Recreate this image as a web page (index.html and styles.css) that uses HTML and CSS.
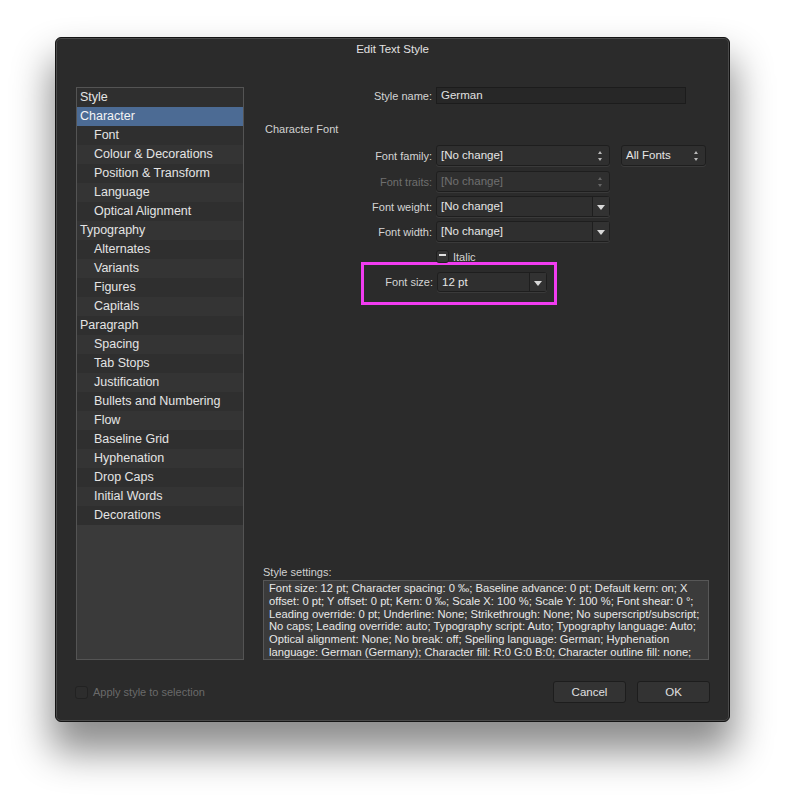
FILE: index.html
```html
<!DOCTYPE html>
<html lang="en">
<head>
    <meta charset="UTF-8">
    <title>Edit Text Style</title>
    <link rel="stylesheet" href="styles.css">
</head>
<body>
<div class="window">
    <div class="title">Edit Text Style</div>
    <div class="content">
        <ul class="side">
            <li>Style</li>
            <li class="active">Character</li>
            <li class="sub">Font</li>
            <li class="sub">Colour &amp; Decorations</li>
            <li class="sub">Position &amp; Transform</li>
            <li class="sub">Language</li>
            <li class="sub">Optical Alignment</li>
            <li>Typography</li>
            <li class="sub">Alternates</li>
            <li class="sub">Variants</li>
            <li class="sub">Figures</li>
            <li class="sub">Capitals</li>
            <li>Paragraph</li>
            <li class="sub">Spacing</li>
            <li class="sub">Tab Stops</li>
            <li class="sub">Justification</li>
            <li class="sub">Bullets and Numbering</li>
            <li class="sub">Flow</li>
            <li class="sub">Baseline Grid</li>
            <li class="sub">Hyphenation</li>
            <li class="sub">Drop Caps</li>
            <li class="sub">Initial Words</li>
            <li class="sub">Decorations</li>
        </ul>
        <div class="main">
            <div class="row name-row">
                <label>Style name:</label>
                <div class="input">German</div>
            </div>
            <div class="heading">Character Font</div>
            <div class="row">
                <label>Font family:</label>
                <div class="select wide">[No change]<span class="updown"><i class="up"></i><i class="dn"></i></span></div>
                <div class="select fonts">All Fonts<span class="updown"><i class="up"></i><i class="dn"></i></span></div>
            </div>
            <div class="row disabled">
                <label>Font traits:</label>
                <div class="select wide">[No change]<span class="updown"><i class="up"></i><i class="dn"></i></span></div>
            </div>
            <div class="row">
                <label>Font weight:</label>
                <div class="select wide drop">[No change]<span class="arrow"></span></div>
            </div>
            <div class="row">
                <label>Font width:</label>
                <div class="select wide drop">[No change]<span class="arrow"></span></div>
            </div>
            <div class="check-row">
                <span class="check mixed"></span>
                <span>Italic</span>
            </div>
            <div class="mark">
                <div class="row">
                    <label>Font size:</label>
                    <div class="select size drop">12 pt<span class="arrow"></span></div>
                </div>
            </div>
            <div class="settings">
                <div class="settings-label">Style settings:</div>
                <div class="settings-box">Font size: 12 pt; Character spacing: 0 ‰; Baseline advance: 0 pt; Default kern: on; X<br>
                    offset: 0 pt; Y offset: 0 pt; Kern: 0 ‰; Scale X: 100 %; Scale Y: 100 %; Font shear: 0 °;<br>
                    Leading override: 0 pt; Underline: None; Strikethrough: None; No superscript/subscript;<br>
                    No caps; Leading override: auto; Typography script: Auto; Typography language: Auto;<br>
                    Optical alignment: None; No break: off; Spelling language: German; Hyphenation<br>
                    language: German (Germany); Character fill: R:0 G:0 B:0; Character outline fill: none;<br>
                    Character outline: none; Character transparency: none; Highlight colour: none; Underline<br>
                    colour: none</div>
            </div>
        </div>
    </div>
    <div class="footer">
        <div class="apply">
            <span class="check"></span>
            <span>Apply style to selection</span>
        </div>
        <div class="buttons">
            <div class="btn">Cancel</div>
            <div class="btn">OK</div>
        </div>
    </div>
</div>
</body>
</html>
```

FILE: styles.css
```css
* {
    padding: 0;
    margin: 0;
    box-sizing: border-box;
}

html,
body {
    background: #ffffff;
}

body {
    font-family: "Liberation Sans", Arial, sans-serif;
    font-size: 12px;
    color: #dcdcdc;
    padding: 37px 0 80px 55px;
}

.window {
    width: 675px;
    height: 685px;
    background: #2b2b2b;
    border: 1px solid #141414;
    border-radius: 6px;
    box-shadow: 0 26px 38px 4px rgba(0, 0, 0, 0.45), 0 0 0 1px #4a4a4a inset;
    display: flex;
    flex-direction: column;
}

.title {
    height: 49px;
    padding-top: 5px;
    text-align: center;
    font-size: 11.5px;
    color: #e2e2e2;
}

.content {
    display: flex;
    padding-left: 20px;
    height: 573px;
}

/* left list */
.side {
    list-style: none;
    width: 168px;
    height: 573px;
    border: 1px solid #545454;
    background: #3a3a3a;
}

.side li {
    height: 19px;
    line-height: 19px;
    padding-left: 3px;
    font-size: 12.5px;
    color: #e4e4e4;
    background: #2f2f2f;
}

.side li:nth-child(even) {
    background: #343434;
}

.side li.sub {
    padding-left: 17px;
}

.side li.active {
    background: #4c6b94;
    color: #f4f4f4;
}

/* form */
.main {
    margin-left: 19px;
    width: 446px;
    display: flex;
    flex-direction: column;
}

.row {
    display: flex;
    align-items: center;
    height: 21px;
    margin-bottom: 4px;
}

.row label {
    width: 173px;
    padding-right: 4px;
    text-align: right;
    font-size: 11px;
    color: #d4d4d4;
}

.row.disabled {
    margin-top: 1px;
}

.row.disabled label,
.row.disabled .select {
    color: #6f6f6f;
}

.name-row {
    height: 17px;
}

.input {
    width: 250px;
    height: 17px;
    line-height: 15px;
    padding-left: 4px;
    background: #272727;
    border: 1px solid #1c1c1c;
    font-size: 11.5px;
    color: #e0e0e0;
}

.heading {
    margin: 15px 0 10px 2px;
    font-size: 11px;
    color: #d2d2d2;
}

.select {
    position: relative;
    height: 21px;
    line-height: 19px;
    padding-left: 4px;
    background: #2f2f2f;
    border: 1px solid #1e1e1e;
    border-radius: 3px;
    box-shadow: 0 1px 0 #3a3a3a;
    font-size: 11.5px;
    color: #e6e6e6;
}

.select.wide {
    width: 174px;
}

.select.fonts {
    width: 85px;
    margin-left: 11px;
}

.select.size {
    width: 110px;
}

.updown {
    position: absolute;
    right: 6px;
    top: 5px;
    width: 5px;
    height: 10px;
}

.updown i {
    position: absolute;
    left: 0;
    width: 0;
    height: 0;
    border-left: 2.5px solid transparent;
    border-right: 2.5px solid transparent;
}

.updown .up {
    top: 0;
    border-bottom: 3px solid #b8b8b8;
}

.updown .dn {
    bottom: 0;
    border-top: 3px solid #b8b8b8;
}

.disabled .updown .up {
    border-bottom-color: #666;
}

.disabled .updown .dn {
    border-top-color: #666;
}

.arrow {
    position: absolute;
    right: 0;
    top: 0;
    width: 17px;
    height: 19px;
    border-left: 1px solid #1e1e1e;
    background: #323232;
}

.arrow:after {
    content: "";
    position: absolute;
    left: 4px;
    top: 8px;
    border-left: 4px solid transparent;
    border-right: 4px solid transparent;
    border-top: 5px solid #d8d8d8;
}

.check-row {
    display: flex;
    align-items: center;
    margin: 4px 0 0 173px;
    height: 13px;
    font-size: 11px;
    color: #d4d4d4;
}

.check {
    display: inline-block;
    width: 13px;
    height: 13px;
    margin-right: 4px;
    border: 1px solid #1e1e1e;
    border-radius: 3px;
    background: #353535;
    position: relative;
}

.check.mixed:after {
    content: "";
    position: absolute;
    left: 2px;
    top: 3px;
    width: 7px;
    height: 2px;
    background: #e0e0e0;
}

.mark {
    width: 196px;
    height: 43px;
    margin: -1px 0 0 98px;
    border: 3px solid #f13cf0;
    padding-top: 6px;
}

.mark .row label {
    width: 73px;
}

.mark .select {
    height: 20px;
    line-height: 18px;
}

.mark .arrow {
    height: 18px;
}

/* style settings */
.settings {
    margin-top: auto;
}

.settings-label {
    font-size: 11px;
    color: #d0d0d0;
    margin-bottom: 2px;
}

.settings-box {
    height: 80px;
    overflow: hidden;
    white-space: nowrap;
    padding: 1px 4px 0 5px;
    background: #3b3b3b;
    border: 1px solid #575757;
    font-size: 11.2px;
    line-height: 12.8px;
    color: #e8e8e8;
}

/* bottom bar */
.footer {
    display: flex;
    justify-content: space-between;
    align-items: center;
    padding: 21px 19px 0 19px;
}

.apply {
    display: flex;
    align-items: center;
    font-size: 11px;
    color: #6a6a6a;
}

.apply .check {
    background: #2d2d2d;
    border-color: #222;
    margin-right: 5px;
}

.buttons {
    display: flex;
    gap: 11px;
}

.btn {
    width: 73px;
    height: 22px;
    line-height: 20px;
    text-align: center;
    background: #333333;
    border: 1px solid #1d1d1d;
    border-radius: 3px;
    font-size: 11.5px;
    color: #e0e0e0;
}
```
